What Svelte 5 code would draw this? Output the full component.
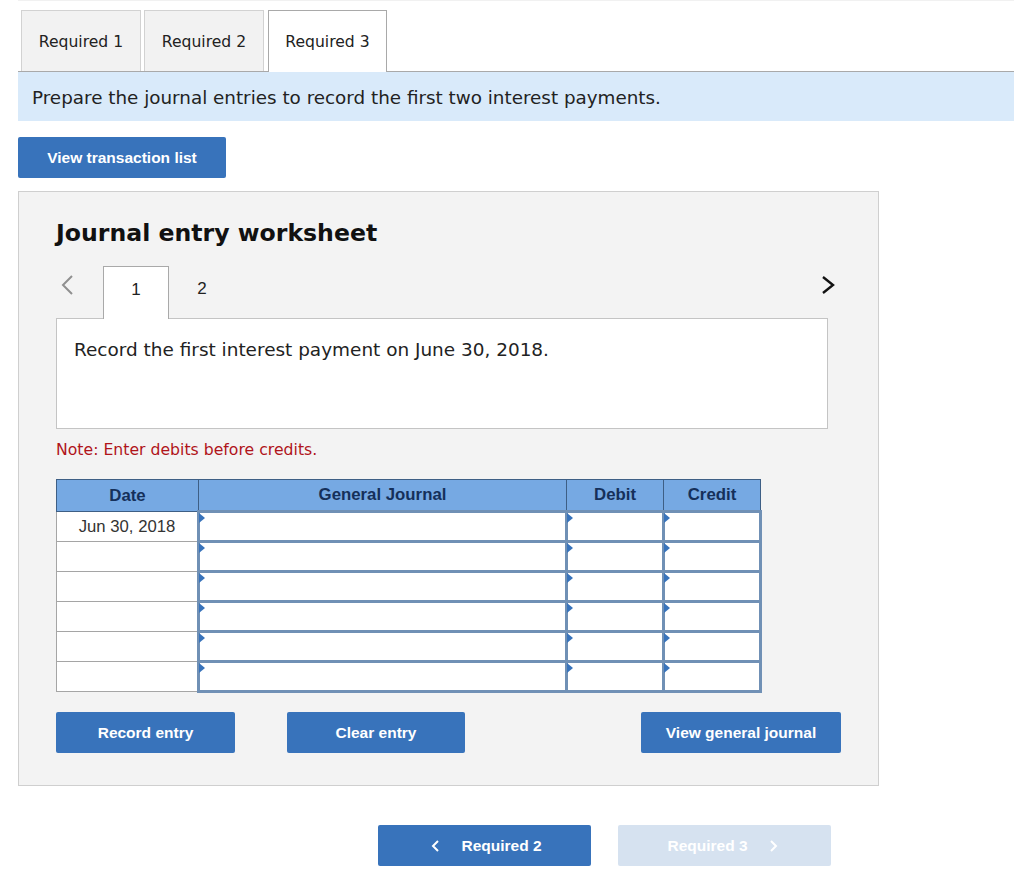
<script>
  const tabs = [
    { label: 'Required 1', active: false },
    { label: 'Required 2', active: false },
    { label: 'Required 3', active: true }
  ];
  const rows = ['Jun 30, 2018', '', '', '', '', ''];
</script>

<div class="page">
  <div class="top-rule"></div>

  <div class="tabs">
    {#each tabs as tab}
      <div class="tab" class:active={tab.active}>{tab.label}</div>
    {/each}
  </div>

  <div class="instructions">Prepare the journal entries to record the first two interest payments.</div>

  <button class="btn list-btn">View transaction list</button>

  <section class="panel">
    <h2>Journal entry worksheet</h2>

    <div class="pager">
      <svg class="arrow prev" width="14" height="22" viewBox="0 0 14 22">
        <path d="M12 2 L3 11 L12 20" fill="none" stroke="#8f8f8f" stroke-width="2" />
      </svg>
      <div class="page-tab current">1</div>
      <div class="page-tab">2</div>
      <svg class="arrow next" width="14" height="22" viewBox="0 0 14 22">
        <path d="M2 3 L12 11 L2 19" fill="none" stroke="#111" stroke-width="2.4" />
      </svg>
    </div>

    <div class="prompt">Record the first interest payment on June 30, 2018.</div>

    <p class="note">Note: Enter debits before credits.</p>

    <table>
      <thead>
        <tr>
          <th class="c-date">Date</th>
          <th class="c-journal">General Journal</th>
          <th class="c-debit">Debit</th>
          <th class="c-credit">Credit</th>
        </tr>
      </thead>
      <tbody>
        {#each rows as date}
          <tr>
            <td class="date">{date}</td>
            <td class="entry"><span class="marker"></span></td>
            <td class="entry"><span class="marker"></span></td>
            <td class="entry"><span class="marker"></span></td>
          </tr>
        {/each}
      </tbody>
    </table>

    <div class="actions">
      <button class="btn record">Record entry</button>
      <button class="btn clear">Clear entry</button>
      <button class="btn general">View general journal</button>
    </div>
  </section>

  <div class="bottom-nav">
    <button class="btn nav back">
      <svg width="10" height="14" viewBox="0 0 10 14">
        <path d="M8 2 L3 7 L8 12" fill="none" stroke="#fff" stroke-width="2" />
      </svg>
      Required 2
    </button>
    <button class="btn nav disabled">
      Required 3
      <svg width="10" height="14" viewBox="0 0 10 14">
        <path d="M2 2 L7 7 L2 12" fill="none" stroke="#fff" stroke-width="2" />
      </svg>
    </button>
  </div>
</div>

<style>
  :global(body) {
    background: #fff;
    margin: 0;
  }
  .page {
    box-sizing: border-box;
    color: #222;
    font-family: "DejaVu Sans", Verdana, sans-serif;
    height: 875px;
    overflow: hidden;
    padding: 0 10px 0 18px;
    width: 1024px;
  }
  .top-rule {
    background: #f1f1f1;
    height: 1px;
    margin-bottom: 9px;
  }
  .tabs {
    border-bottom: 1px solid #a9a9a9;
    display: flex;
    gap: 3px;
    height: 61px;
    padding-left: 3px;
  }
  .tab {
    align-items: center;
    background: #f2f2f2;
    border: 1px solid #d2d2d2;
    border-bottom: 0;
    box-sizing: border-box;
    display: flex;
    font-size: 15.6px;
    height: 61px;
    justify-content: center;
    padding-top: 2px;
    width: 120px;
  }
  .tab.active {
    background: #fff;
    border: 1px solid #a9a9a9;
    border-bottom: 0;
    height: 62px;
    margin-left: 1px;
    padding-bottom: 1px;
    width: 119px;
  }
  .instructions {
    align-items: center;
    background: #d9eafa;
    box-sizing: border-box;
    display: flex;
    font-size: 18.33px;
    height: 49px;
    padding-left: 14px;
    padding-top: 1px;
  }
  .btn {
    background: #3873bb;
    border: 0;
    border-radius: 2px;
    color: #fff;
    font-family: "Liberation Sans", Arial, sans-serif;
    font-size: 15.5px;
    font-weight: 700;
    height: 41px;
    padding: 0;
  }
  .list-btn {
    display: block;
    margin-top: 16px;
    width: 208px;
  }
  .panel {
    background: #f3f3f3;
    border: 1px solid #cfcfcf;
    box-sizing: border-box;
    height: 595px;
    margin-top: 13px;
    padding: 0 37px;
    width: 861px;
  }
  h2 {
    color: #111;
    font-size: 23.6px;
    font-weight: 700;
    line-height: 30px;
    margin: 26px 0 0;
  }
  .pager {
    align-items: flex-end;
    display: flex;
    height: 53px;
    margin-top: 17px;
    position: relative;
    width: 772px;
  }
  .arrow {
    position: absolute;
    top: 9px;
  }
  .prev { left: 4px; }
  .next { right: -7px; }
  .page-tab {
    align-items: center;
    box-sizing: border-box;
    display: flex;
    font-family: "Liberation Sans", Arial, sans-serif;
    font-size: 17px;
    height: 53px;
    justify-content: center;
    padding-bottom: 6px;
    width: 66px;
  }
  .page-tab.current {
    background: #fff;
    border: 1px solid #a9a9a9;
    border-bottom: 0;
    height: 53px;
    margin-bottom: -1px;
    margin-left: 47px;
    position: relative;
    z-index: 1;
  }
  .prompt {
    background: #fff;
    border: 1px solid #c4c4c4;
    box-sizing: border-box;
    font-size: 18.45px;
    height: 111px;
    line-height: 20px;
    padding: 21px 17px;
    width: 772px;
  }
  .note {
    color: #b0141a;
    font-size: 15.7px;
    line-height: 18px;
    margin: 12px 0 0;
  }
  table {
    border-collapse: collapse;
    font-family: "Liberation Sans", Arial, sans-serif;
    margin-top: 20px;
    table-layout: fixed;
    width: 704px;
  }
  th {
    background: #76a9e3;
    border: 1px solid #3e5f85;
    box-sizing: border-box;
    color: #15305a;
    font-size: 16.8px;
    font-weight: 700;
    height: 32px;
    padding: 0;
  }
  .c-date { width: 142px; }
  .c-journal { width: 368px; }
  .c-debit { width: 97px; }
  .c-credit { width: 97px; }
  td {
    box-sizing: border-box;
    height: 30px;
    padding: 0;
  }
  .date {
    background: #fff;
    border: 1px solid #a5a5a5;
    color: #333;
    font-size: 16.7px;
    text-align: center;
  }
  .entry {
    background: #fff;
    border: 3px solid #7090b5;
    position: relative;
  }
  .marker {
    border-bottom: 5px solid transparent;
    border-left: 6px solid #3873bb;
    border-top: 5px solid transparent;
    height: 0;
    left: -1px;
    position: absolute;
    top: 0;
    width: 0;
  }
  .actions {
    display: flex;
    margin-top: 19px;
    position: relative;
    width: 785px;
  }
  .record { width: 179px; }
  .clear {
    margin-left: 52px;
    width: 178px;
  }
  .general {
    margin-left: auto;
    width: 200px;
  }
  .bottom-nav {
    display: flex;
    gap: 27px;
    margin-left: 360px;
    margin-top: 39px;
  }
  .nav {
    align-items: center;
    display: flex;
    gap: 21px;
    justify-content: center;
    width: 213px;
  }
  .nav.back {
    padding-left: 3px;
  }
  .nav.disabled {
    background: #d6e2f0;
    padding-right: 3px;
  }
</style>
